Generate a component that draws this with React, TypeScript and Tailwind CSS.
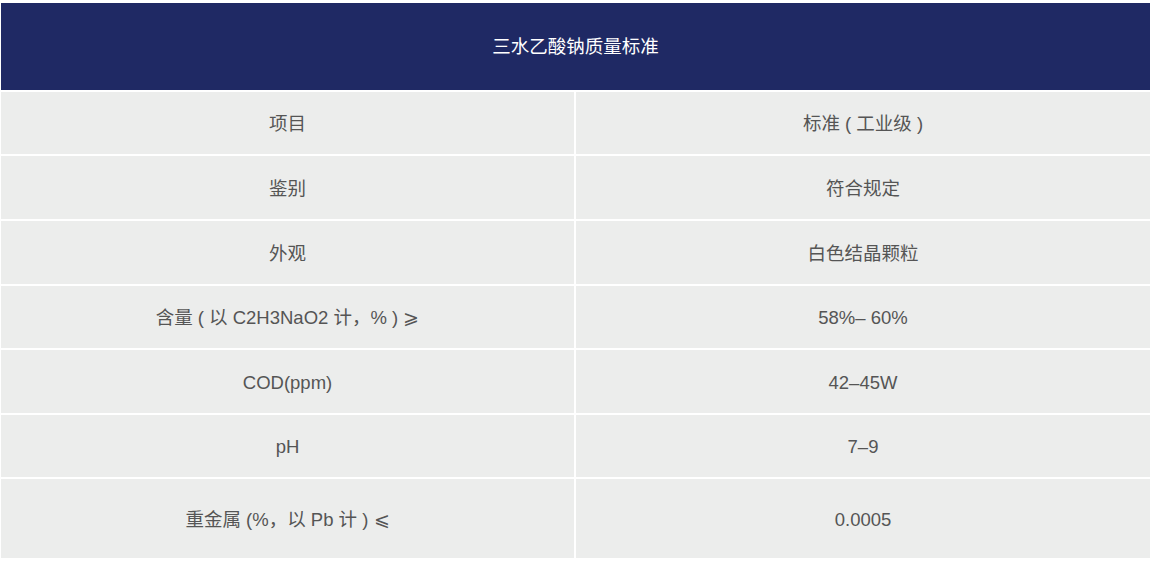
import React from "react";

const rows: { left: React.ReactNode; right: string; h: string }[] = [
  { left: "项目", right: "标准 ( 工业级 )", h: "h-[62px]" },
  { left: "鉴别", right: "符合规定", h: "h-[63px]" },
  { left: "外观", right: "白色结晶颗粒", h: "h-[63px]" },
  {
    left: (
      <>
        含量 ( 以 C2H3NaO2 计，% ){" "}
        <span className="font-['DejaVu_Sans'] text-[18.5px] font-light">⩾</span>
      </>
    ),
    right: "58%– 60%",
    h: "h-[62px]",
  },
  { left: "COD(ppm)", right: "42–45W", h: "h-[63px]" },
  { left: "pH", right: "7–9", h: "h-[62px]" },
  {
    left: (
      <>
        重金属 (%，以 Pb 计 ){" "}
        <span className="font-['DejaVu_Sans'] text-[18.5px] font-light">⩽</span>
      </>
    ),
    right: "0.0005",
    h: "h-[79px]",
  },
];

export default function App() {
  return (
    <div
      className="w-[1152px] h-[562px] bg-white pt-[3px] pl-[1px] overflow-hidden"
      style={{ fontFamily: '"Liberation Sans", "Noto Sans CJK SC", sans-serif' }}
    >
      <div className="grid grid-cols-[573px_574px] gap-[2px] w-[1149px]">
        <div className="col-span-2 h-[87px] bg-[#1f2964] flex items-center justify-center text-white text-[18.5px] pt-[1px]">
          三水乙酸钠质量标准
        </div>
        {rows.map((r, i) => (
          <React.Fragment key={i}>
            <div
              className={`${r.h} bg-[#ecedec] flex items-center justify-center text-[#555555] text-[18.5px] pt-[2px]`}
            >
              <span>{r.left}</span>
            </div>
            <div
              className={`${r.h} bg-[#ecedec] flex items-center justify-center text-[#555555] text-[18.5px] pt-[2px]`}
            >
              {r.right}
            </div>
          </React.Fragment>
        ))}
      </div>
    </div>
  );
}
